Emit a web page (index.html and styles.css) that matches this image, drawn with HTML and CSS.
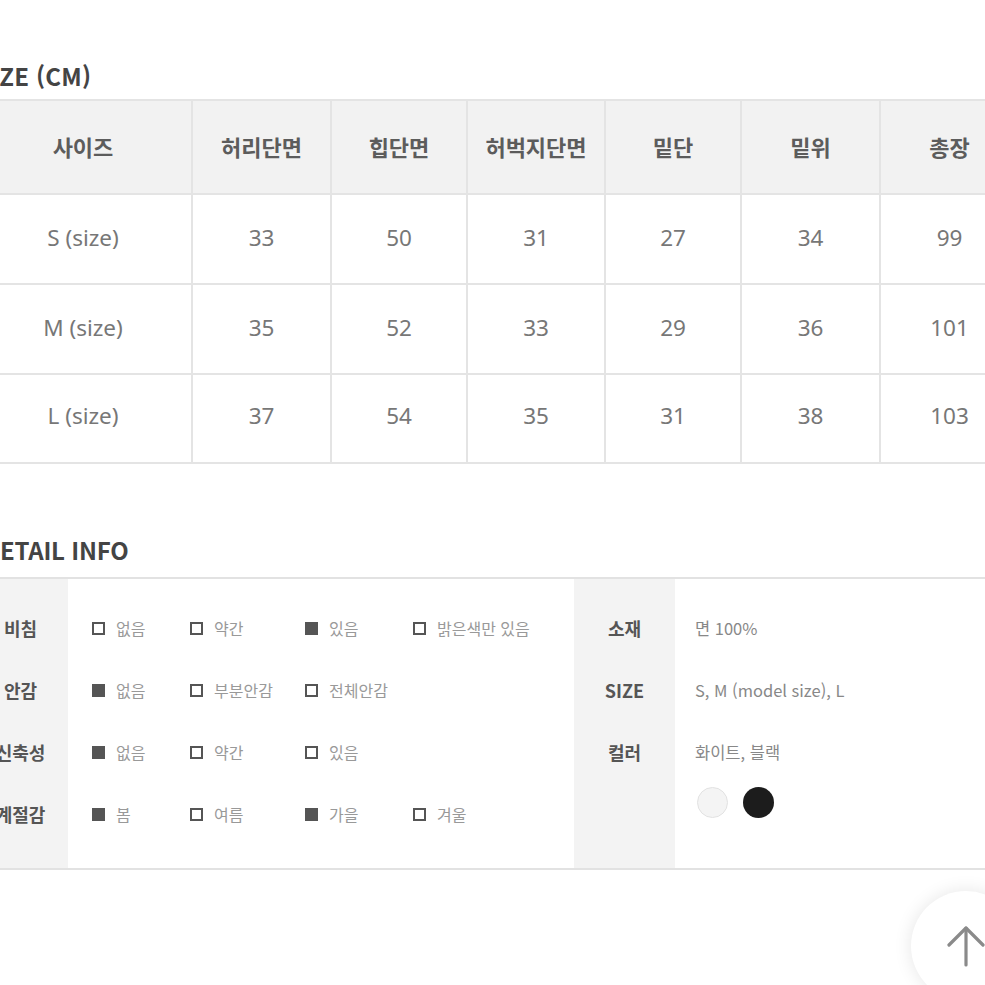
FILE: index.html
```html
<!DOCTYPE html>
<html lang="ko">
<head>
<meta charset="utf-8">
<title>Size / Detail info</title>
<link rel="stylesheet" href="styles.css">
</head>
<body>
<div class="page">
  <h2 class="sec-title size-title">SIZE (CM)</h2>
  <table class="size-table">
    <colgroup>
      <col class="c0"><col class="c1"><col class="c2"><col class="c3"><col class="c4"><col class="c5"><col class="c6">
    </colgroup>
    <thead>
      <tr class="head-row"><th>사이즈</th><th>허리단면</th><th>힙단면</th><th>허벅지단면</th><th>밑단</th><th>밑위</th><th>총장</th></tr>
    </thead>
    <tbody>
      <tr class="r1"><td>S (size)</td><td>33</td><td>50</td><td>31</td><td>27</td><td>34</td><td>99</td></tr>
      <tr class="r2"><td>M (size)</td><td>35</td><td>52</td><td>33</td><td>29</td><td>36</td><td>101</td></tr>
      <tr class="r3"><td>L (size)</td><td>37</td><td>54</td><td>35</td><td>31</td><td>38</td><td>103</td></tr>
    </tbody>
  </table>

  <h2 class="sec-title detail-title">DETAIL INFO</h2>
  <div class="detail">
    <div class="label-col left-labels">
      <div class="lab">비침</div>
      <div class="lab">안감</div>
      <div class="lab">신축성</div>
      <div class="lab">계절감</div>
    </div>
    <div class="opts">
      <div class="opt"><span class="box"></span>없음</div>
      <div class="opt"><span class="box"></span>약간</div>
      <div class="opt"><span class="box on"></span>있음</div>
      <div class="opt"><span class="box"></span>밝은색만 있음</div>

      <div class="opt"><span class="box on"></span>없음</div>
      <div class="opt"><span class="box"></span>부분안감</div>
      <div class="opt"><span class="box"></span>전체안감</div>
      <div class="opt"></div>

      <div class="opt"><span class="box on"></span>없음</div>
      <div class="opt"><span class="box"></span>약간</div>
      <div class="opt"><span class="box"></span>있음</div>
      <div class="opt"></div>

      <div class="opt"><span class="box on"></span>봄</div>
      <div class="opt"><span class="box"></span>여름</div>
      <div class="opt"><span class="box on"></span>가을</div>
      <div class="opt"><span class="box"></span>겨울</div>
    </div>
    <div class="label-col right-labels">
      <div class="lab">소재</div>
      <div class="lab">SIZE</div>
      <div class="lab">컬러</div>
    </div>
    <div class="values">
      <div class="val">면 100%</div>
      <div class="val">S, M (model size), L</div>
      <div class="val">화이트, 블랙</div>
      <div class="swatches">
        <span class="swatch white"></span>
        <span class="swatch black"></span>
      </div>
    </div>
  </div>
</div>

<button class="to-top" aria-label="맨 위로">
  <svg width="40" height="44" viewBox="0 0 40 44" fill="none" stroke="#8a8a8a" stroke-width="3.2" stroke-linecap="round" stroke-linejoin="round">
    <path d="M20 4 L20 41"/>
    <path d="M3 21 L20 4 L37 21"/>
  </svg>
</button>
</body>
</html>
```

FILE: styles.css
```css
html, body {
  margin: 0;
  padding: 0;
  background: #ffffff;
  overflow: hidden;
  height: 985px;
}

body {
  font-family: "Noto Sans CJK KR", "Noto Sans", sans-serif;
  color: #555;
  position: relative;
}

.page {
  margin-left: -27px;
  width: 1045px;
  padding-top: 60px;
}

.sec-title {
  margin: 0;
  font-size: 24px;
  line-height: 32px;
  font-weight: 700;
  color: #444;
}

.size-title {
  padding-left: 3px;
  letter-spacing: 0.2px;
}

.size-table {
  margin-top: 7px;
  border-collapse: collapse;
  table-layout: fixed;
  width: 1045px;
}

.c0 { width: 218px; }
.c1 { width: 139px; }
.c2 { width: 136px; }
.c3 { width: 138px; }
.c4 { width: 136px; }
.c5 { width: 139px; }
.c6 { width: 139px; }

.size-table th,
.size-table td {
  border: 2px solid #e4e4e4;
  text-align: center;
  padding: 0;
}

.size-table th {
  background: #f2f2f2;
  color: #5c5c5c;
  font-weight: 700;
  font-size: 22px;
  height: 90px;
  padding-bottom: 2px;
}

.size-table td {
  color: #777;
  font-weight: 400;
  font-size: 22.5px;
  font-family: "Noto Sans", "Noto Sans CJK KR", sans-serif;
  padding-bottom: 3px;
}

.size-table .r1 td { height: 85px; }
.size-table .r2 td { height: 85px; }
.size-table .r3 td { height: 81px; padding-bottom: 6px; }

.detail-title {
  margin-top: 70px;
  padding-left: 10px;
  letter-spacing: -0.2px;
}

.detail {
  margin-top: 11px;
  display: flex;
  border-top: 2px solid #e2e2e2;
  border-bottom: 2px solid #e2e2e2;
  height: 289px;
}

.label-col {
  background: #f3f3f3;
  padding: 18px 0;
  display: flex;
  flex-direction: column;
}

.left-labels { width: 95px; }
.right-labels { width: 101px; }

.lab {
  height: 62px;
  display: flex;
  align-items: center;
  justify-content: center;
  font-size: 18px;
  font-weight: 700;
  color: #555;
}

.opts {
  width: 482px;
  padding: 18px 0 18px 24px;
  display: grid;
  grid-template-columns: 98px 115px 108px 1fr;
  grid-auto-rows: 62px;
}

.opt {
  display: flex;
  align-items: center;
  font-size: 16px;
  color: #999;
  white-space: nowrap;
}

.box {
  width: 9px;
  height: 9px;
  border: 2px solid #555;
  margin-right: 11px;
  flex: none;
}

.box.on {
  background: #555;
}

.values {
  flex: 1;
  padding: 18px 0 18px 20px;
}

.val {
  height: 62px;
  display: flex;
  align-items: center;
  font-size: 16.5px;
  color: #888;
}

.swatches {
  display: flex;
  gap: 15px;
  margin-top: 4px;
  margin-left: 2px;
}

.swatch {
  width: 31px;
  height: 31px;
  border-radius: 50%;
  box-sizing: border-box;
}

.swatch.white {
  background: #f4f4f4;
  border: 1px solid #e2e2e2;
}

.swatch.black {
  background: #1c1c1c;
}

.to-top {
  position: absolute;
  left: 911px;
  top: 891px;
  width: 110px;
  height: 110px;
  border-radius: 50%;
  border: none;
  background: #ffffff;
  box-shadow: 0 0 18px rgba(0, 0, 0, 0.10);
  display: flex;
  align-items: center;
  justify-content: center;
  padding: 0;
}
```
